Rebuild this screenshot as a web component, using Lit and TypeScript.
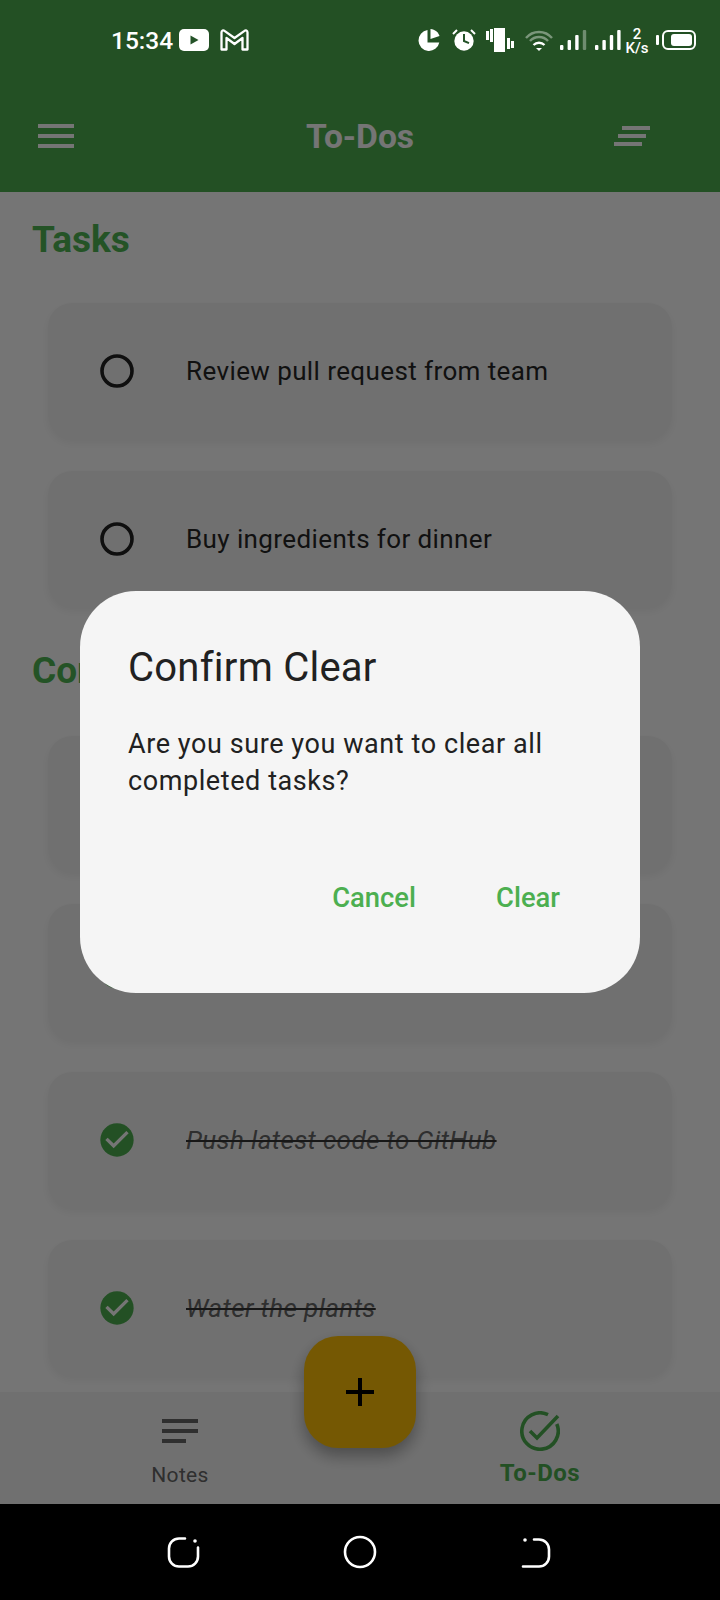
import { LitElement, css, html, svg } from "lit";
import { customElement } from "lit/decorators.js";

const CHECK_DISC = "M12 2C6.48 2 2 6.48 2 12s4.48 10 10 10 10-4.48 10-10S17.52 2 12 2z";
const CHECK_MARK = "M10 17l-5-5 1.41-1.41L10 14.17l7.59-7.59L19 8l-9 9z";

const bars = (x0: number, step: number, faintLast: boolean) =>
  [5, 10, 15, 20].map(
    (h, i) =>
      svg`<rect x=${x0 + i * step} y=${22 - h} width="3.4" height=${h} rx="1" fill="#fff" opacity=${faintLast && i === 3 ? 0.35 : 1}></rect>`,
  );

@customElement("app-root")
export class AppRoot extends LitElement {
  static styles = css`
    :host {
      display: block;
      position: relative;
      width: 720px;
      height: 1600px;
      overflow: hidden;
      font-family: Roboto, "Noto Sans", sans-serif;
      background: #fff;
    }
    .screen {
      display: flex;
      flex-direction: column;
      height: 1600px;
    }

    /* header */
    .header {
      height: 192px;
      flex: none;
      background: #4caf50;
    }
    .status {
      position: relative;
      z-index: 3;
      height: 80px;
      display: flex;
      align-items: flex-start;
      padding: 28px 0 0 111px;
      box-sizing: border-box;
      color: #fff;
    }
    .time {
      font-size: 24.5px;
      font-weight: 500;
      line-height: 26px;
      width: 67px;
    }
    .status svg {
      display: block;
      flex: none;
    }
    .yt {
      margin-left: 1px;
    }
    .gmail {
      margin-left: 11px;
    }
    .indicators {
      margin-left: 168px;
    }
    .speed {
      width: 26px;
      text-align: center;
      font-size: 15px;
      line-height: 14px;
      font-weight: 500;
      margin-top: -1px;
    }
    .battery {
      margin-left: 6px;
    }
    .toolbar {
      height: 112px;
      display: grid;
      grid-template-columns: 1fr auto 1fr;
      align-items: center;
      padding: 0 38px;
      box-sizing: border-box;
      color: #fff;
    }
    .toolbar h1 {
      margin: 0;
      font-size: 33.6px;
      font-weight: 700;
    }
    .toolbar svg {
      display: block;
    }
    .toolbar .sort {
      justify-self: end;
      margin-right: 32px;
    }

    /* content */
    .content {
      flex: 1;
      overflow: hidden;
    }
    h2 {
      margin: 0;
      padding-left: 32px;
      font-size: 37px;
      line-height: 48px;
      font-weight: 700;
      color: #4fb654;
    }
    .tasks-title {
      margin-top: 24px;
    }
    .done-title {
      margin-top: 40px;
    }
    .list {
      display: flex;
      flex-direction: column;
      gap: 32px;
      padding: 0 48px;
      margin-top: 39px;
    }
    .done-list {
      margin-top: 41px;
    }
    .card {
      height: 136px;
      flex: none;
      display: flex;
      align-items: center;
      gap: 49px;
      padding-left: 49px;
      border-radius: 24px;
      background: #f5f5f5;
      box-shadow: 0 4px 10px rgba(0, 0, 0, 0.06);
      color: #262626;
      font-size: 26px;
      letter-spacing: 0.4px;
    }
    .card svg {
      display: block;
      flex: none;
    }
    .card .struck {
      font-style: italic;
      color: #666;
      text-decoration: line-through;
      text-decoration-color: #333;
    }

    /* bottom nav */
    .nav {
      height: 112px;
      flex: none;
      display: grid;
      grid-template-columns: 1fr 1fr;
      background: #f5f5f5;
    }
    .nav-item {
      display: flex;
      flex-direction: column;
      align-items: center;
      padding-top: 27px;
    }
    .nav-item svg {
      display: block;
    }
    .nav-item span {
      font-size: 21px;
      line-height: 26px;
      letter-spacing: 0.3px;
      color: #666;
      margin-top: 19px;
    }
    .nav-item.active {
      padding-top: 19px;
    }
    .nav-item.active span {
      font-size: 24px;
      font-weight: 700;
      letter-spacing: 0.5px;
      color: #4caf50;
      margin-top: 9px;
    }
    .system {
      height: 96px;
      flex: none;
      background: #000;
      display: flex;
      align-items: center;
      position: relative;
      z-index: 3;
    }
    .system svg {
      display: block;
    }

    /* over the content */
    .fab {
      position: absolute;
      left: 304px;
      top: 1336px;
      width: 112px;
      height: 112px;
      border-radius: 34px;
      background: #ffc107;
      box-shadow: 0 8px 16px rgba(0, 0, 0, 0.32);
      display: flex;
      align-items: center;
      justify-content: center;
    }
    .scrim {
      position: absolute;
      z-index: 2;
      left: 0;
      top: 0;
      width: 720px;
      height: 1504px;
      background: rgba(0, 0, 0, 0.54);
    }
    .dialog {
      box-sizing: border-box;
      width: 560px;
      height: 402px;
      margin: 591px 0 0 80px;
      padding: 49px 48px 0 48px;
      border-radius: 56px;
      background: #f5f5f5;
      color: #212121;
    }
    .dialog h3 {
      margin: 0;
      font-size: 40px;
      line-height: 56px;
      font-weight: 400;
      letter-spacing: 0.25px;
    }
    .dialog p {
      margin: 30px 0 0;
      font-size: 27px;
      line-height: 37px;
      letter-spacing: 0.58px;
    }
    .actions {
      display: flex;
      justify-content: flex-end;
      gap: 80px;
      margin-top: 80px;
      padding-right: 32px;
      color: #4caf50;
      font-size: 27.4px;
      line-height: 36px;
      font-weight: 500;
    }
  `;

  private card(text: string, done: boolean) {
    return html`
      <div class="card">
        ${done
          ? html`<svg width="40" height="40" viewBox="0 0 24 24">
              <path d=${CHECK_DISC} fill="#4caf50"></path>
              <path d=${CHECK_MARK} fill="#fff"></path>
            </svg>`
          : html`<svg width="40" height="40" viewBox="0 0 40 40"><circle cx="20" cy="20" r="15" fill="none" stroke="#212121" stroke-width="3.6"></circle></svg>`}
        ${text ? html`<span class=${done ? "struck" : ""}>${text}</span>` : ""}
      </div>
    `;
  }

  render() {
    return html`
      <div class="screen">
        <div class="header">
          <div class="status">
            <span class="time">15:34</span>
            <svg class="yt" width="30" height="24" viewBox="0 0 30 24">
              <rect x="0" y="1" width="30" height="22" rx="5" fill="#fff"></rect>
              <path d="M11.500 7.500v9l8-4.500z" fill="#245228"></path>
            </svg>
            <svg class="gmail" width="30" height="24" viewBox="0 0 30 24">
              <path d="M1.500 21.500V4.500c0-2 1.800-2.600 3-1.600L14.500 10l10-7.100c1.200-1 3-.4 3 1.600v17h-5V10l-8 6-8-6v11.500z" fill="none" stroke="#fff" stroke-width="2.300" stroke-linejoin="round"></path>
            </svg>
            <svg class="indicators" width="206" height="26" viewBox="0 0 206 26">
              <path d="M9.500 2.100A10.500 10.500 0 1 0 21.300 14.500H9.500z" fill="#fff"></path>
              <path d="M12.500 1c4.500.4 8 3.500 9 7l-9 3z" fill="#fff"></path>
              <circle cx="46" cy="13" r="9.700" fill="#fff"></circle>
              <path d="M46 6v7l5 2.200" fill="none" stroke="#245228" stroke-width="2"></path>
              <path d="M35 6l4-4M57 6l-4-4" fill="none" stroke="#fff" stroke-width="2"></path>
              <rect x="76" y="0" width="11" height="24" fill="#fff"></rect>
              <rect x="72" y="1" width="3" height="13" fill="#fff"></rect>
              <rect x="68" y="3" width="3" height="9" fill="#fff"></rect>
              <rect x="89" y="10" width="3" height="11" fill="#fff"></rect>
              <rect x="93" y="13" width="3" height="7" fill="#fff"></rect>
              <path d="M108 10a17 17 0 0 1 26 0M112 13a12 12 0 0 1 18 0" fill="none" stroke="#fff" stroke-opacity=".4" stroke-width="2.400"></path>
              <path d="M115.500 17a8 8 0 0 1 11 0" fill="none" stroke="#fff" stroke-width="2.400"></path>
              <path d="M118 20h6l-3 3z" fill="#fff"></path>
              ${bars(142, 7.6, true)} ${bars(177, 7.4, false)}
            </svg>
            <div class="speed">2<br />K/s</div>
            <svg class="battery" width="42" height="24" viewBox="0 0 42 24">
              <rect x="0" y="7" width="3" height="10" rx="1" fill="#fff"></rect>
              <rect x="7" y="3" width="32" height="18" rx="5" fill="none" stroke="#fff" stroke-width="2"></rect>
              <rect x="15" y="6" width="21" height="12" rx="3" fill="#fff"></rect>
            </svg>
          </div>
          <div class="toolbar">
            <svg width="36" height="24" viewBox="0 0 36 24"><path d="M0 0h36v4H0zM0 10h36v4H0zM0 20h36v4H0z" fill="#fff"></path></svg>
            <h1>To-Dos</h1>
            <svg class="sort" width="36" height="20" viewBox="0 0 36 20"><path d="M8 0h28v4H8zM4 8h28v4H4zM0 16h28v4H0z" fill="#fff"></path></svg>
          </div>
        </div>

        <div class="content">
          <h2 class="tasks-title">Tasks</h2>
          <div class="list">
            ${this.card("Review pull request from team", false)}
            ${this.card("Buy ingredients for dinner", false)}
          </div>
          <h2 class="done-title">Completed</h2>
          <div class="list done-list">
            ${this.card("", true)} ${this.card("", true)}
            ${this.card("Push latest code to GitHub", true)}
            ${this.card("Water the plants", true)}
          </div>
        </div>

        <div class="nav">
          <div class="nav-item">
            <svg width="36" height="24" viewBox="0 0 36 24"><path d="M0 0h36v4H0zM0 10h36v4H0zM0 20h24v4H0z" fill="#666"></path></svg>
            <span>Notes</span>
          </div>
          <div class="nav-item active">
            <svg width="40" height="40" viewBox="0 0 40 40" fill="none" stroke="#4caf50" stroke-width="3.600">
              <path d="M36.800 13A18.200 18.200 0 1 1 28 3.700"></path>
              <path d="M10 20l7 7L38 5"></path>
            </svg>
            <span>To-Dos</span>
          </div>
        </div>

        <div class="system">
          <svg width="720" height="96" viewBox="0 0 720 96" fill="none" stroke="#fff" stroke-width="2.600" stroke-linecap="round">
            <path d="M185 34.500h-6a10 10 0 0 0-10 10v8a10 10 0 0 0 10 10h9a10 10 0 0 0 10-10v-9"></path>
            <circle cx="195" cy="37" r="1.800" fill="#fff" stroke="none"></circle>
            <circle cx="360" cy="48" r="15"></circle>
            <path d="M534 35.500h5a10 10 0 0 1 10 10v7a10 10 0 0 1-10 10h-16"></path>
            <circle cx="525" cy="36" r="1.800" fill="#fff" stroke="none"></circle>
          </svg>
        </div>
      </div>

      <div class="fab">
        <svg width="48" height="48" viewBox="0 0 24 24"><path d="M19 13h-6v6h-2v-6H5v-2h6V5h2v6h6v2z" fill="#000"></path></svg>
      </div>

      <div class="scrim">
        <div class="dialog">
          <h3>Confirm Clear</h3>
          <p>Are you sure you want to clear all completed tasks?</p>
          <div class="actions"><span>Cancel</span><span>Clear</span></div>
        </div>
      </div>
    `;
  }
}
